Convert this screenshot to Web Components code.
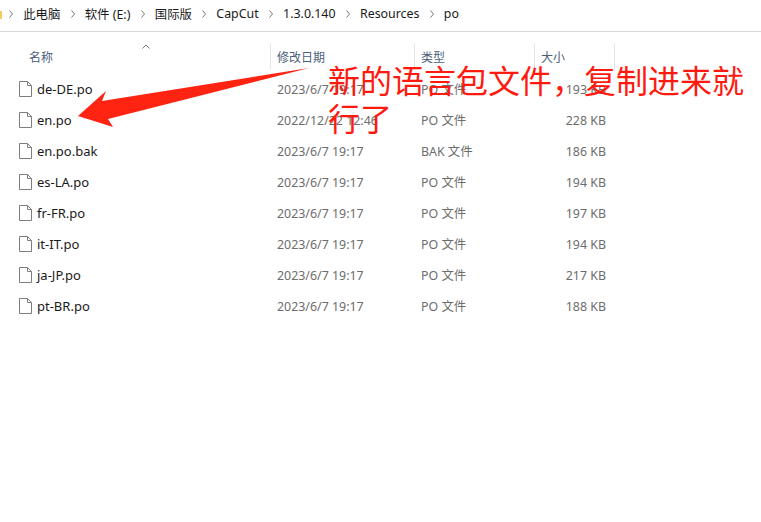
<!DOCTYPE html>
<html lang="zh">
<head>
<meta charset="utf-8">
<title>po</title>
<style>
  html, body { margin: 0; background: #fff; }
</style>
</head>
<body>
<explorer-window>
  <address-bar path="此电脑|软件 (E:)|国际版|CapCut|1.3.0.140|Resources|po"></address-bar>
  <column-header></column-header>
  <file-row name="de-DE.po" date="2023/6/7 19:17" type="PO 文件" size="193 KB"></file-row>
  <file-row name="en.po" date="2022/12/22 12:46" type="PO 文件" size="228 KB"></file-row>
  <file-row name="en.po.bak" date="2023/6/7 19:17" type="BAK 文件" size="186 KB"></file-row>
  <file-row name="es-LA.po" date="2023/6/7 19:17" type="PO 文件" size="194 KB"></file-row>
  <file-row name="fr-FR.po" date="2023/6/7 19:17" type="PO 文件" size="197 KB"></file-row>
  <file-row name="it-IT.po" date="2023/6/7 19:17" type="PO 文件" size="194 KB"></file-row>
  <file-row name="ja-JP.po" date="2023/6/7 19:17" type="PO 文件" size="217 KB"></file-row>
  <file-row name="pt-BR.po" date="2023/6/7 19:17" type="PO 文件" size="188 KB"></file-row>
  <red-callout>新的语言包文件，复制进来就行了</red-callout>
</explorer-window>

<script>
const FONT = `"Noto Sans", "Noto Sans CJK SC", sans-serif`

customElements.define('explorer-window', class extends HTMLElement {
  constructor() {
    super()
    this.attachShadow({ mode: 'open' }).innerHTML = `
      <style>
        :host {
          display: block;
          position: relative;
          width: 761px;
          height: 522px;
          overflow: hidden;
          background: #fff;
          font: 12px ${FONT};
        }
      </style>
      <slot></slot>
    `
  }
})

customElements.define('address-bar', class extends HTMLElement {
  constructor() {
    super()
    this.attachShadow({ mode: 'open' }).innerHTML = `
      <style>
        :host {
          display: flex;
          align-items: center;
          height: 27px;
          padding-bottom: 4px;
          border-bottom: 1px solid #d9d9d9;
          color: #1a1a1a;
          box-sizing: content-box;
          font-size: 12.4px;
        }
        .folder { width: 2px; height: 8px; background: #f4c95d; margin: 2px -3.2px 0 0; }
        svg { width: 4px; height: 8px; margin: 0 10.2px; flex: none; }
        span { white-space: nowrap; }
      </style>
      <div class="folder"></div>
    `
    for (const part of this.getAttribute('path').split('|')) {
      this.shadowRoot.innerHTML += `
        <svg viewBox="0 0 4 8"><path d="M.5.5 3.5 4 .5 7.5" fill="none" stroke="#777"/></svg>
        <span>${part}</span>
      `
    }
  }
})

customElements.define('column-header', class extends HTMLElement {
  constructor() {
    super()
    this.attachShadow({ mode: 'open' }).innerHTML = `
      <style>
        :host {
          display: grid;
          grid-template-columns: 271px 144px 120px 80px;
          height: 27px;
          margin: 11px 0 4px;
          color: #4c607a;
          position: relative;
          width: 615px;
        }
        div { display: flex; align-items: center; padding-left: 6px; border-right: 1px solid #e5e5e5; }
        div:first-of-type { padding-left: 29px; }
        svg { position: absolute; left: 142px; top: 1px; width: 8px; height: 5px; }
      </style>
      <div>名称</div><div>修改日期</div><div>类型</div><div>大小</div>
      <svg viewBox="0 0 8 5"><path d="M.5 4.5 4 1l3.5 3.5" fill="none" stroke="#777"/></svg>
    `
  }
})

customElements.define('file-row', class extends HTMLElement {
  constructor() {
    super()
    const attr = name => this.getAttribute(name)
    this.attachShadow({ mode: 'open' }).innerHTML = `
      <style>
        :host {
          display: grid;
          grid-template-columns: 277px 144px 115px 70px;
          align-items: center;
          height: 31px;
          width: 606px;
          color: #6d6d6d;
          font-size: 12.4px;
        }
        .name { display: flex; align-items: center; gap: 5px; padding-left: 19px; color: #1a1a1a; font-size: 13px; }
        .name, .type { padding-bottom: 2px; }
        svg { width: 13px; height: 16px; flex: none; }
        .size { text-align: right; }
      </style>
      <div class="name">
        <svg viewBox="0 0 13 16"><path d="M.5.5h8l4 4v11H.5z M8.5.5v4h4" fill="#fff" stroke="#7e7e7e"/></svg>
        <span>${attr('name')}</span>
      </div>
      <div>${attr('date')}</div>
      <div class="type">${attr('type')}</div>
      <div class="size">${attr('size')}</div>
    `
  }
})

customElements.define('red-callout', class extends HTMLElement {
  constructor() {
    super()
    this.attachShadow({ mode: 'open' }).innerHTML = `
      <style>
        :host { display: contents; }
        svg { position: absolute; left: 0; top: 0; width: 761px; height: 522px; pointer-events: none; }
        p {
          position: absolute;
          left: 328px;
          top: 60px;
          width: 420px;
          margin: 0;
          font: 32px/38px "Noto Sans CJK SC", sans-serif;
          color: #ff1a10;
        }
      </style>
      <svg viewBox="0 0 761 522">
        <polygon points="78,116 106,91 102,101 309,68 108,119 113,127" fill="#ff2412"/>
      </svg>
      <p><slot></slot></p>
    `
  }
})
</script>
</body>
</html>
